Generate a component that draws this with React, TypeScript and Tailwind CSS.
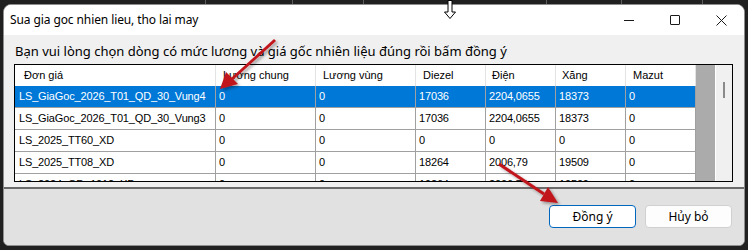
import React from "react";

const cols = [
  { label: "Đơn giá", w: "w-[201px]", pl: "pl-[9px]" },
  { label: "Lương chung", w: "w-[100px]", pl: "pl-[7px]" },
  { label: "Lương vùng", w: "w-[100px]", pl: "pl-[7px]" },
  { label: "Diezel", w: "w-[70px]", pl: "pl-[7px]" },
  { label: "Điện", w: "w-[70px]", pl: "pl-[6px]" },
  { label: "Xăng", w: "w-[70px]", pl: "pl-[6px]" },
  { label: "Mazut", w: "w-[70px]", pl: "pl-[7px]" },
];

const rows = [
  ["LS_GiaGoc_2026_T01_QD_30_Vung4", "0", "0", "17036", "2204,0655", "18373", "0"],
  ["LS_GiaGoc_2026_T01_QD_30_Vung3", "0", "0", "17036", "2204,0655", "18373", "0"],
  ["LS_2025_TT60_XD", "0", "0", "0", "0", "0", "0"],
  ["LS_2025_TT08_XD", "0", "0", "18264", "2006,79", "19509", "0"],
  ["LS_2024_QD_1012_XD", "0", "0", "19264", "2006,79", "19509", "0"],
];

function Arrows() {
  return (
    <svg className="absolute left-0 top-0 pointer-events-none" width="748" height="250">
      <defs>
        <filter id="sh" x="-20%" y="-20%" width="140%" height="140%">
          <feDropShadow dx="2" dy="2" stdDeviation="1.5" floodColor="#000" floodOpacity="0.35" />
        </filter>
      </defs>
      <g filter="url(#sh)" fill="#c0141c" stroke="#c0141c">
        <line x1="275" y1="40" x2="232" y2="79" strokeWidth="3" />
        <polygon points="220,89 226,72 238,84" stroke="none" />
        <line x1="499" y1="164" x2="544" y2="194" strokeWidth="3" />
        <polygon points="558,203 540,201 548,187" stroke="none" />
      </g>
    </svg>
  );
}

export default function App() {
  return (
    <div className="relative w-[748px] h-[250px] overflow-hidden bg-[#202020]" style={{ fontFamily: '"Noto Sans", sans-serif' }}>
      {/* what is behind the dialog */}
      <div className="relative h-[4px]">
        {[205, 292, 363, 546, 621, 702].map((x) => (
          <div key={x} className="absolute top-0 h-[4px] w-px bg-[#5c5c5c]" style={{ left: x }} />
        ))}
      </div>

      <div className="ml-[3px] w-[742px] h-[242px] flex flex-col border border-[#8e8e8e] rounded-t-[8px] rounded-b-[6px] overflow-hidden bg-white">
        {/* title bar */}
        <div className="h-[30px] flex items-center bg-white">
          <span className="pl-[6px] text-[12px] tracking-[-0.1px] text-black">Sua gia goc nhien lieu, tho lai may</span>
          <div className="ml-auto flex items-center h-full">
            <div className="w-[46px] h-full flex items-center justify-center">
              <div className="w-[10px] h-px bg-[#1a1a1a]" />
            </div>
            <div className="w-[46px] h-full flex items-center justify-center">
              <div className="w-[10px] h-[10px] border border-[#1a1a1a] rounded-[1px]" />
            </div>
            <div className="w-[46px] h-full flex items-center justify-center">
              <svg width="11" height="11" viewBox="0 0 11 11">
                <path d="M0.5 0.5 L10.5 10.5 M10.5 0.5 L0.5 10.5" stroke="#1a1a1a" strokeWidth="1" />
              </svg>
            </div>
          </div>
        </div>

        {/* body */}
        <div className="h-[152px] bg-[#f0f0f0] px-[10px]">
          <div className="mt-[7px] h-[18px] leading-[18px] text-[13px] text-black pl-[1px]">
            Bạn vui lòng chọn dòng có mức lương và giá gốc nhiên liệu đúng rồi bấm đồng ý
          </div>
          <div
            className="mt-[4px] w-[719px] h-[118px] border border-black flex overflow-hidden text-[11px] bg-[#ababab]"
            style={{ fontFamily: '"Liberation Sans", Arial, sans-serif' }}
          >
            <div className="w-[681px] flex flex-col">
              <div className="h-[21px] flex bg-white shrink-0">
                {cols.map((c) => (
                  <div key={c.label} className={`${c.w} ${c.pl} h-full border-r border-[#e3e3e3] flex items-center text-black shrink-0`}>
                    {c.label}
                  </div>
                ))}
              </div>
              {rows.map((r, i) => (
                <div
                  key={i}
                  className={`h-[22px] flex shrink-0 border-b border-[#a0a0a0] ${i === 0 ? "bg-[#0078d7] text-white" : "bg-white text-black"}`}
                >
                  {r.map((v, j) => (
                    <div
                      key={j}
                      className={`${cols[j].w} h-full border-r border-[#a0a0a0] flex items-center shrink-0 whitespace-nowrap tracking-[-0.15px] ${j === 0 ? "pl-[4px]" : "pl-[3px]"}`}
                    >
                      {v}
                    </div>
                  ))}
                </div>
              ))}
            </div>
            <div className="w-[19px]" />
            <div className="w-[17px] bg-[#f0f0f0] border-l border-white flex justify-center">
              <div className="mt-[17px] w-[2px] h-[16px] bg-[#8a8a8a]" />
            </div>
          </div>
        </div>

        {/* footer */}
        <div className="flex-1 bg-[#e1e1e1] border-t-2 border-[#6b6b6b] flex justify-end items-start pt-[16px] pr-[12px] gap-[9px]">
          <button className="w-[87px] h-[23px] bg-white border border-[#0067c0] rounded-[4px] text-[12px] text-black">
            Đồng ý
          </button>
          <button className="w-[87px] h-[23px] bg-[#fdfdfd] border border-[#d0d0d0] rounded-[4px] text-[12px] text-black">
            Hủy bỏ
          </button>
        </div>
      </div>

      {/* mouse cursor */}
      <svg className="absolute left-[443px] top-0" width="14" height="20" viewBox="0 0 14 20">
        <path d="M5 0.5 L9 0.5 L9 12 L12.5 12 L7 18.5 L1.5 12 L5 12 Z" fill="white" stroke="black" strokeWidth="1" />
      </svg>

      <Arrows />
    </div>
  );
}
